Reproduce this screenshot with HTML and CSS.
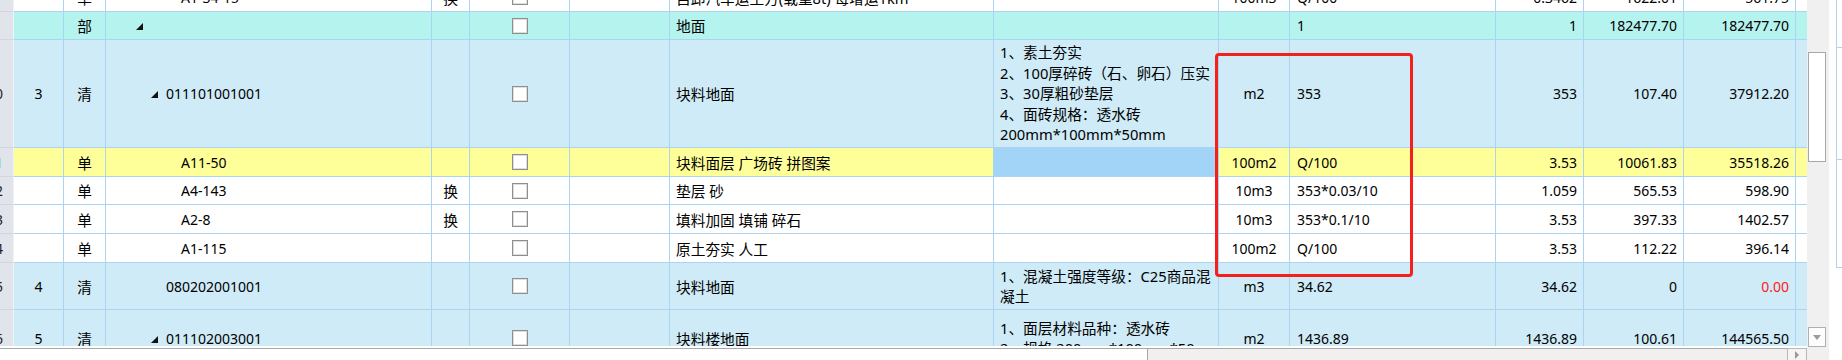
FILE: index.html
```html
<!DOCTYPE html>
<html>
  <head>
    <title>分部分项</title>
    <link rel="stylesheet" href="styles.css">
  </head>
  <body>
    <div class="app">
      <div class="main">
        <div class="viewport">
          <div class="rows">

            <div class="row white h29 lead">
              <div class="c hdr"></div>
              <div class="c mid"></div>
              <div class="c mid cjk">单</div>
              <div class="c code lv2">A1-34-15</div>
              <div class="c mid cjk">换</div>
              <div class="c mid"><span class="chk"></span></div>
              <div class="c"></div>
              <div class="c name">自卸汽车运土方(载重8t) 每增运1km</div>
              <div class="c feat"></div>
              <div class="c mid">100m3</div>
              <div class="c expr">Q/100</div>
              <div class="c num">0.3462</div>
              <div class="c num">1622.01</div>
              <div class="c num">561.75</div>
              <div class="c"></div>
            </div>

            <div class="row cyan h28">
              <div class="c hdr"></div>
              <div class="c mid"></div>
              <div class="c mid cjk">部</div>
              <div class="c code lv0"><span class="tri"></span></div>
              <div class="c mid"></div>
              <div class="c mid"><span class="chk"></span></div>
              <div class="c"></div>
              <div class="c name">地面</div>
              <div class="c feat"></div>
              <div class="c mid"></div>
              <div class="c expr">1</div>
              <div class="c num">1</div>
              <div class="c num">182477.70</div>
              <div class="c num">182477.70</div>
              <div class="c"></div>
            </div>

            <div class="row blue h108">
              <div class="c hdr">10</div>
              <div class="c mid">3</div>
              <div class="c mid cjk">清</div>
              <div class="c code lv1"><span class="tri"></span><span class="txt">011101001001</span></div>
              <div class="c mid"></div>
              <div class="c mid"><span class="chk"></span></div>
              <div class="c"></div>
              <div class="c name">块料地面</div>
              <div class="c feat">1、素土夯实<br>2、100厚碎砖（石、卵石）压实<br>3、30厚粗砂垫层<br>4、面砖规格：透水砖<br>200mm*100mm*50mm</div>
              <div class="c mid">m2</div>
              <div class="c expr">353</div>
              <div class="c num">353</div>
              <div class="c num">107.40</div>
              <div class="c num">37912.20</div>
              <div class="c"></div>
            </div>

            <div class="row yellow h29">
              <div class="c hdr sel">11</div>
              <div class="c mid"></div>
              <div class="c mid cjk">单</div>
              <div class="c code lv2">A11-50</div>
              <div class="c mid"></div>
              <div class="c mid"><span class="chk"></span></div>
              <div class="c"></div>
              <div class="c name">块料面层 广场砖 拼图案</div>
              <div class="c feat focus"></div>
              <div class="c mid">100m2</div>
              <div class="c expr">Q/100</div>
              <div class="c num">3.53</div>
              <div class="c num">10061.83</div>
              <div class="c num">35518.26</div>
              <div class="c"></div>
            </div>

            <div class="row white h28">
              <div class="c hdr">12</div>
              <div class="c mid"></div>
              <div class="c mid cjk">单</div>
              <div class="c code lv2">A4-143</div>
              <div class="c mid cjk">换</div>
              <div class="c mid"><span class="chk"></span></div>
              <div class="c"></div>
              <div class="c name">垫层 砂</div>
              <div class="c feat"></div>
              <div class="c mid">10m3</div>
              <div class="c expr">353*0.03/10</div>
              <div class="c num">1.059</div>
              <div class="c num">565.53</div>
              <div class="c num">598.90</div>
              <div class="c"></div>
            </div>

            <div class="row white h29">
              <div class="c hdr">13</div>
              <div class="c mid"></div>
              <div class="c mid cjk">单</div>
              <div class="c code lv2">A2-8</div>
              <div class="c mid cjk">换</div>
              <div class="c mid"><span class="chk"></span></div>
              <div class="c"></div>
              <div class="c name">填料加固 填铺 碎石</div>
              <div class="c feat"></div>
              <div class="c mid">10m3</div>
              <div class="c expr">353*0.1/10</div>
              <div class="c num">3.53</div>
              <div class="c num">397.33</div>
              <div class="c num">1402.57</div>
              <div class="c"></div>
            </div>

            <div class="row white h29">
              <div class="c hdr">14</div>
              <div class="c mid"></div>
              <div class="c mid cjk">单</div>
              <div class="c code lv2">A1-115</div>
              <div class="c mid"></div>
              <div class="c mid"><span class="chk"></span></div>
              <div class="c"></div>
              <div class="c name">原土夯实 人工</div>
              <div class="c feat"></div>
              <div class="c mid">100m2</div>
              <div class="c expr">Q/100</div>
              <div class="c num">3.53</div>
              <div class="c num">112.22</div>
              <div class="c num">396.14</div>
              <div class="c"></div>
            </div>

            <div class="row blue h47">
              <div class="c hdr">15</div>
              <div class="c mid">4</div>
              <div class="c mid cjk">清</div>
              <div class="c code lv1"><span class="txt">080202001001</span></div>
              <div class="c mid"></div>
              <div class="c mid"><span class="chk"></span></div>
              <div class="c"></div>
              <div class="c name">块料地面</div>
              <div class="c feat">1、混凝土强度等级：C25商品混<br>凝土</div>
              <div class="c mid">m3</div>
              <div class="c expr">34.62</div>
              <div class="c num">34.62</div>
              <div class="c num">0</div>
              <div class="c num red">0.00</div>
              <div class="c"></div>
            </div>

            <div class="row blue h57">
              <div class="c hdr">16</div>
              <div class="c mid">5</div>
              <div class="c mid cjk">清</div>
              <div class="c code lv1"><span class="tri"></span><span class="txt">011102003001</span></div>
              <div class="c mid"></div>
              <div class="c mid"><span class="chk"></span></div>
              <div class="c"></div>
              <div class="c name">块料楼地面</div>
              <div class="c feat">1、面层材料品种：透水砖<br>2、规格 200mm*100mm*50mm</div>
              <div class="c mid">m2</div>
              <div class="c expr">1436.89</div>
              <div class="c num">1436.89</div>
              <div class="c num">100.61</div>
              <div class="c num">144565.50</div>
              <div class="c"></div>
            </div>

          </div>
          <div class="mark"></div>
        </div>
        <div class="hscroll">
          <div class="hthumb"></div>
          <div class="htrack"></div>
          <div class="harrow"><span class="arr-r"></span></div>
        </div>
      </div>
      <div class="vscroll">
        <div class="vthumb"></div>
        <div class="vtrack"></div>
        <div class="varrow"><span class="arr-d"></span></div>
      </div>
      <div class="side">
        <div class="sidebox">
          <div class="sb"></div>
          <div class="sb"></div>
        </div>
      </div>
    </div>
  </body>
</html>
```

FILE: styles.css
```css
body { margin: 0; background: #fff; font-family: "Noto Sans", "Noto Sans CJK SC", sans-serif; font-size: 14px; color: #000; }

.app { display: flex; width: 1842px; height: 360px; overflow: hidden; }

.main { width: 1807px; display: flex; flex-direction: column; }
.viewport { position: relative; height: 346px; overflow: hidden; }

.row { display: grid; grid-template-columns: 14px 50px 42px 326px 38px 100px 100px 324px 225px 71px 206px 88px 100px 112px 11px; }
.row.lead { margin-top: -17px; }
.h28 { height: 28px; }
.h29 { height: 29px; }
.h47 { height: 47px; }
.h57 { height: 57px; }
.h108 { height: 108px; }

.white { background: #fff; }
.cyan { background: #b5f3ee; }
.blue { background: #cfebf7; }
.yellow { background: #ffff99; }

.c { box-sizing: border-box; border-right: 1px solid #aad4f2; border-bottom: 1px solid #aad4f2; display: flex; align-items: center; white-space: nowrap; overflow: hidden; padding: 0 6px; }
.c.mid { justify-content: center; padding: 0; }
.c.num { justify-content: flex-end; }
.c.expr { padding-left: 7px; }
.c.name, .c.feat, .c.cjk { font-size: 14.7px; }
.c.feat { line-height: 20.5px; }
.c.focus { background: #a2d4f8; }
.c.red { color: #ff2020; }

.c.hdr { background: #e1e4ea; border-right-color: #f2f3f6; border-bottom-color: #d2d7df; justify-content: flex-end; padding: 0 10px 0 0; color: #222; }
.c.hdr.sel { color: #1a6fd6; }

.code.lv0 { padding-left: 30px; }
.code.lv1 { padding-left: 45px; }
.code.lv1 .txt { margin-left: 15px; }
.code.lv1 .tri + .txt { margin-left: 8px; }
.code.lv2 { padding-left: 75px; }

.tri { width: 0; height: 0; border-bottom: 7px solid #111; border-left: 7px solid transparent; margin-top: 2px; }

.chk { width: 14px; height: 14px; border: 1px solid #8f8f8f; background: #fff; box-shadow: inset 0 0 0 1px #dedede; }

.mark { position: absolute; left: 1215px; top: 53px; width: 198px; height: 224px; box-sizing: border-box; border: 3px solid #f4201c; border-radius: 4px; }

.hscroll { height: 14px; display: flex; padding-top: 2px; box-sizing: border-box; }
.hthumb { width: 1148px; background: #fff; border-top: 1px solid #a8a8a8; border-right: 1px solid #a8a8a8; box-sizing: border-box; }
.htrack { flex: 1; background: #f0f0f0; border-top: 1px solid #a8a8a8; }
.harrow { width: 20px; background: #f5f5f5; border: 1px solid #b8b8b8; border-bottom: none; box-sizing: border-box; display: flex; align-items: center; justify-content: center; }
.arr-r { width: 0; height: 0; border-left: 4px solid #9a9a9a; border-top: 4px solid transparent; border-bottom: 4px solid transparent; }

.vscroll { width: 22px; background: #f0f0f0; display: flex; flex-direction: column; padding: 0 3px 13px 1px; box-sizing: border-box; }
.vthumb { margin-top: 52px; height: 110px; background: #fff; border: 1px solid #a8a8a8; box-sizing: border-box; }
.vtrack { flex: 1; }
.varrow { height: 20px; background: #fdfdfd; border: 1px solid #b0b0b0; box-sizing: border-box; display: flex; align-items: center; justify-content: center; }
.arr-d { width: 0; height: 0; border-top: 5px solid #9a9a9a; border-left: 4px solid transparent; border-right: 4px solid transparent; }

.side { width: 13px; background: #fff; padding-left: 7px; box-sizing: border-box; }
.sidebox { height: 268px; border-left: 1px solid #b4d2ee; border-bottom: 1px solid #b4d2ee; box-sizing: border-box; padding-top: 47px; }
.sb { height: 111px; border-top: 1px solid #b4d2ee; }
```
